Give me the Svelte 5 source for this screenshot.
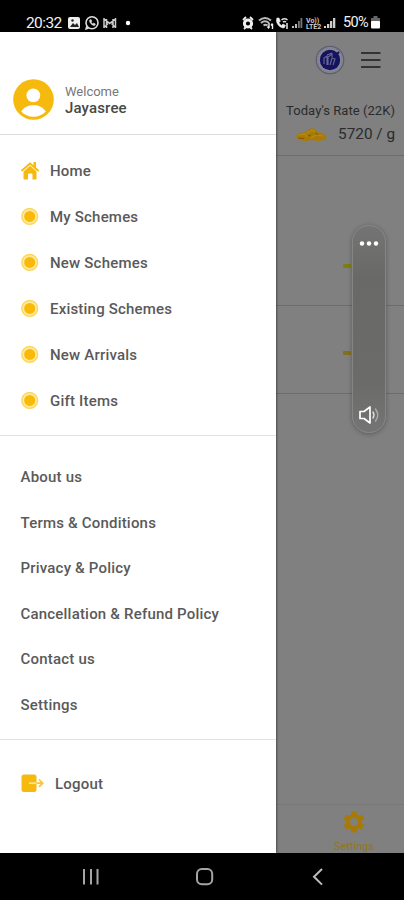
<script lang="ts">
  const schemes = ['My Schemes', 'New Schemes', 'Existing Schemes', 'New Arrivals', 'Gift Items'];
  const links = [
    'About us',
    'Terms & Conditions',
    'Privacy & Policy',
    'Cancellation & Refund Policy',
    'Contact us',
    'Settings'
  ];
</script>

<div class="phone">
  <div class="status">
    <span class="time">20:32</span>
    <svg class="status-left" width="66" height="16" viewBox="0 0 66 16">
      <rect x="0" y="2" width="12" height="12" rx="2" fill="#eee" />
      <path d="M2 12l3-4 2 2 2-2 2 4z" fill="#222" />
      <circle cx="4.5" cy="5.5" r="1.2" fill="#222" />
      <circle cx="24" cy="7.8" r="6" fill="none" stroke="#ddd" stroke-width="1.6" />
      <path d="M17 15l1.200-4.400 2.800 3.200z" fill="#ddd" />
      <path d="M21.700 5c-.8 2.300 2.200 5.500 4.900 5.600l.8-1.600-1.700-.9-.9.8-1.700-1.700.7-1-.8-1.600z" fill="#ddd" stroke="#ddd" stroke-width=".6" />
      <path d="M36 3v10M47.500 3v10M36 3.500l5.700 5 5.800-5M36 12.500l4-4M47.500 12.500l-4-4M38.500 4v9M45 4v9" fill="none" stroke="#ccc" stroke-width="1.500" />
      <circle cx="60" cy="8" r="2.200" fill="#fff" />
    </svg>
    <svg class="status-right" width="98" height="16" viewBox="0 0 98 16">
      <circle cx="6" cy="8.500" r="3.600" fill="none" stroke="#eee" stroke-width="3" />
      <path d="M1 5l3-3M11 5L8 2M2 14l2-2M10 14l-2-2" stroke="#eee" stroke-width="1.800" fill="none" />
      <path d="M17 5.500q6-5 12 0M19 8q4-3.500 8 0M21.500 10.500q2-1.500 4 0" fill="none" stroke="#bbb" stroke-width="2" />
      <path d="M27 8v5M25.500 11.500L27 13.500M30.500 14V9M29 10.500L30.500 8.500" stroke="#eee" stroke-width="1.400" fill="none" />
      <path d="M35 3c-2 4 2 10 7 10l1.500-2.500-2.500-1.500-1.500 1.500c-1.200-.7-2-1.800-2.500-3l1.300-1.300L37 3z" fill="#eee" stroke="#eee" stroke-width=".6" />
      <path d="M39.500 5q3-2.500 6 0M41 7q1.500-1 3 0M45 8v6" fill="none" stroke="#ddd" stroke-width="1.600" />
      <path d="M50 13v-2h2v2zM53 13V9h2v4z" fill="#bbb" />
      <path d="M56 13V6h1.800v7zM58.500 13V3h1.800v10z" fill="#777" />
      <text x="64" y="7.500" class="volte">Vo))</text>
      <text x="64" y="14" class="volte">LTE2</text>
      <path d="M82 13v-2h2v2zM85 13V9h2.300v4zM88 13V6h2.300v7zM91 13V3h2.300v10z" fill="#ccc" />
    </svg>
    <span class="percent">50%</span>
    <svg class="battery" width="9" height="13" viewBox="0 0 9 13">
      <path d="M2.500 0h4v2H9v4H0V2h2.500z" fill="#666" />
      <rect y="5" width="9" height="7.500" rx="1" fill="#fff" />
    </svg>
  </div>

  <div class="screen">
    <aside class="drawer">
      <div class="profile">
        <svg width="41" height="41" viewBox="0 0 41 41">
          <circle cx="20.500" cy="20.500" r="20.300" fill="#f6b90d" />
          <circle cx="20.300" cy="16.300" r="6.900" fill="#fff" />
          <path d="M8.200 32.500C11 28.200 15.500 26.300 20.500 26.300s9.500 1.900 12.300 6.200c-3 3.200-7.500 5.300-12.300 5.300s-9.300-2.100-12.300-5.300z" fill="#fff" />
        </svg>
        <div class="who">
          <span class="welcome">Welcome</span>
          <span class="name">Jayasree</span>
        </div>
      </div>

      <nav class="menu">
        <div class="item">
          <svg width="20" height="20" viewBox="0 0 20 20">
            <path d="M2 9.500l8-7 8 7" fill="none" stroke="#f6b90d" stroke-width="1.800" stroke-linecap="round" />
            <path d="M13.500 1H16v6l-2.500-2z" fill="#f6b90d" />
            <path d="M3.500 10.500L10 4.800l6.500 5.700v7q0 1-1 1h-3v-5q0-1-1-1h-2.500q-1 0-1 1v5h-3.500q-1 0-1-1z" fill="#f6b90d" />
          </svg>
          <span>Home</span>
        </div>
        {#each schemes as label}
          <div class="item">
            <svg width="20" height="20" viewBox="0 0 20 20">
              <circle cx="9.700" cy="9.400" r="7.900" fill="#fdea9c" stroke="#fad65c" stroke-width="1.300" />
              <circle cx="9.700" cy="9.400" r="5.500" fill="#f8b90a" />
            </svg>
            <span>{label}</span>
          </div>
        {/each}
      </nav>

      <nav class="links">
        {#each links as label}
          <div class="link">{label}</div>
        {/each}
      </nav>

      <div class="logout">
        <svg width="24" height="20" viewBox="0 0 24 20">
          <rect x="1.500" y=".5" width="15" height="17.500" rx="2.500" fill="#f6b90d" />
          <path d="M9 9.200h7.500" stroke="#fbe39a" stroke-width="1.800" />
          <path d="M16.500 9.200H22M19 5.500l3.700 3.700-3.700 3.700" fill="none" stroke="#f7c53a" stroke-width="1.700" />
        </svg>
        <span>Logout</span>
      </div>
    </aside>

    <main class="page">
      <header class="top">
        <div class="brand">
          <svg width="30" height="30" viewBox="0 0 30 30">
            <circle cx="15" cy="15" r="13.700" fill="#8a8a96" stroke="#5f5f74" stroke-width="1.300" />
            <circle cx="15" cy="15" r="12" fill="none" stroke="#77778a" stroke-width="1" stroke-dasharray="1.500 1" />
            <circle cx="15" cy="15" r="10.200" fill="#15135f" />
            <path d="M9 19v-6l3-2v9M13 20v-8l4-3v3M15 20l2-7 3 1-2 6M12 10l5-2" fill="none" stroke="#6a6890" stroke-width="1.100" />
            <path d="M20 11l4-4" stroke="#15135f" stroke-width="2" />
          </svg>
          <svg width="20" height="18" viewBox="0 0 20 18">
            <path d="M0 2h19.500M0 9h19.500M0 16h19.500" stroke="#333" stroke-width="2" />
          </svg>
        </div>
        <div class="rate-title">Today's Rate (22K)</div>
        <div class="rate">
          <svg width="31" height="13" viewBox="0 0 31 13">
            <path d="M0 8l3-3 7-1 3-3 5-1 3 4 6 1 4 4-2 3-8 1-5-1-6 1-8-1z" fill="#a97a08" />
            <path d="M3 7l6-1 2 3M11 5l6-3 2 3M15 10l5-3 7 1" fill="none" stroke="#b98d12" stroke-width="1.200" />
            <path d="M2 10l6 .5M12 8l3-1M19 5l3 2" stroke="#80590a" stroke-width="1" />
          </svg>
          <span>5720 / g</span>
        </div>
      </header>
      <section class="row tall"><i class="dash green"></i></section>
      <section class="row"><i class="dash"></i></section>
      <footer class="tab">
        <svg width="26" height="26" viewBox="0 0 24 24">
          <path fill="#a67a05" d="M19.140 12.940c.04-.3.06-.61.06-.94s-.02-.64-.07-.94l2.030-1.580a.49.49 0 0 0 .12-.61l-1.920-3.320a.49.49 0 0 0-.59-.22l-2.390.96c-.5-.38-1.030-.7-1.620-.94l-.36-2.540a.48.48 0 0 0-.48-.41h-3.840c-.24 0-.43.17-.47.41l-.36 2.540c-.59.24-1.130.57-1.620.94l-2.390-.96a.48.48 0 0 0-.59.22L2.740 8.870c-.12.21-.08.47.12.61l2.030 1.580c-.05.3-.09.63-.09.94s.02.64.07.94l-2.030 1.580a.49.49 0 0 0-.12.61l1.920 3.320c.12.22.37.29.59.22l2.390-.96c.5.38 1.030.7 1.620.94l.36 2.540c.05.24.24.41.48.41h3.840c.24 0 .44-.17.47-.41l.36-2.540c.59-.24 1.130-.56 1.620-.94l2.390.96c.22.08.47 0 .59-.22l1.920-3.320a.48.48 0 0 0-.12-.61zM12 15.600A3.600 3.600 0 1 1 12 8.400a3.600 3.600 0 0 1 0 7.200z" />
        </svg>
        <span>Settings</span>
      </footer>
    </main>

    <div class="volume">
      <svg width="20" height="5" viewBox="0 0 20 5" fill="#fff">
        <circle cx="3" cy="2.500" r="2.200" />
        <circle cx="10" cy="2.500" r="2.200" />
        <circle cx="17" cy="2.500" r="2.200" />
      </svg>
      <svg width="22" height="20" viewBox="0 0 22 20" fill="none" stroke-linejoin="round" stroke-linecap="round">
        <path d="M2 6.500h4l6-4.500v16l-6-4.500H2z" stroke="#fff" stroke-width="1.700" />
        <path d="M15 7q2 3 0 6" stroke="#ddd" stroke-width="1.400" />
        <path d="M17.500 4q4.500 6 0 12" stroke="#aaa" stroke-width="1.400" />
      </svg>
    </div>
  </div>

  <div class="navbar">
    <svg width="18" height="18" viewBox="0 0 18 18">
      <path d="M2 1v15.500M9 1v15.500M15.500 1v15.500" stroke="#a5a5a5" stroke-width="2" />
    </svg>
    <svg width="18" height="18" viewBox="0 0 18 18">
      <rect x="1" y="1" width="15.200" height="15.200" rx="4.800" fill="none" stroke="#a5a5a5" stroke-width="2" />
    </svg>
    <svg width="18" height="18" viewBox="0 0 18 18">
      <path d="M13 1L5 8.800l8 7.800" fill="none" stroke="#bdbdbd" stroke-width="2" />
    </svg>
  </div>
</div>

<style>
  :global(body) {
    margin: 0;
    background: #000;
  }

  svg {
    display: block;
    flex: none;
  }

  .phone {
    width: 404px;
    height: 900px;
    display: flex;
    flex-direction: column;
    overflow: hidden;
    background: #000;
    font-family: Roboto, 'Liberation Sans', sans-serif;
    color: #5a5a5a;
  }

  .status {
    box-sizing: border-box;
    height: 32px;
    padding: 13px 24px 0 26px;
    display: flex;
    align-items: center;
    color: #f2f2f2;
    font-size: 15.5px;
  }

  .time {
    width: 42px;
    letter-spacing: -0.6px;
  }

  .status-right {
    margin-left: auto;
  }

  .volte {
    font-size: 7px;
    font-weight: 700;
    fill: #ccc;
  }

  .percent {
    width: 27px;
    margin-left: 3px;
    font-size: 14.5px;
    letter-spacing: -0.6px;
  }

  .battery {
    margin-left: 1px;
  }

  .screen {
    position: relative;
    height: 821px;
    display: flex;
    background: #808080;
  }

  .drawer {
    width: 276px;
    background: #fff;
    box-shadow: 1px 0 2px rgba(0, 0, 0, 0.4);
    z-index: 1;
  }

  .profile {
    box-sizing: border-box;
    height: 103px;
    padding: 47px 0 0 13px;
    display: flex;
    gap: 11px;
    border-bottom: 1px solid #dedede;
  }

  .who {
    display: flex;
    flex-direction: column;
    padding-top: 4px;
  }

  .welcome {
    font-size: 13px;
    line-height: 17px;
    color: #777;
  }

  .name {
    font-size: 15px;
    font-weight: 500;
    line-height: 16px;
    letter-spacing: 0.15px;
    color: #484848;
  }

  .menu {
    padding: 13px 0 11px 20px;
    border-bottom: 1px solid #e2e2e2;
  }

  .item {
    height: 46px;
    display: flex;
    align-items: center;
    gap: 10px;
  }

  .item,
  .link,
  .logout {
    font-size: 15px;
    font-weight: 500;
    letter-spacing: 0.2px;
  }

  .links {
    padding: 19px 0 10px 20.5px;
    border-bottom: 1px solid #e2e2e2;
  }

  .link {
    height: 45.6px;
    line-height: 45.6px;
  }

  .logout {
    height: 88px;
    padding-left: 20px;
    display: flex;
    align-items: center;
    gap: 11px;
  }

  .page {
    flex: 1;
    display: flex;
    flex-direction: column;
    color: #2b2b2b;
  }

  .top {
    box-sizing: border-box;
    height: 124px;
    padding: 13px 9px 0 0;
    border-bottom: 1px solid #6c6c6c;
  }

  .brand {
    display: flex;
    align-items: center;
    justify-content: flex-end;
    gap: 16px;
    padding-right: 14px;
  }

  .rate-title {
    margin-top: 27px;
    font-size: 13px;
    line-height: 18px;
    letter-spacing: 0.05px;
    text-align: right;
    white-space: nowrap;
  }

  .rate {
    display: flex;
    align-items: center;
    justify-content: flex-end;
    gap: 11px;
    margin-top: 3px;
    font-size: 15.3px;
    line-height: 22px;
  }

  .row {
    box-sizing: border-box;
    height: 88px;
    padding: 0 53px 0 0;
    display: flex;
    align-items: center;
    justify-content: flex-end;
    border-bottom: 1px solid #6c6c6c;
  }

  .row.tall {
    height: 150px;
    padding-top: 70px;
  }

  .dash {
    width: 8px;
    height: 4px;
    margin-top: 7px;
    border-radius: 1px;
    background: #84701c;
  }

  .dash.green {
    margin-top: 0;
    background: #7d7f12;
  }

  .tab {
    height: 49px;
    margin-top: auto;
    padding: 4px 0 0 28px;
    box-sizing: border-box;
    width: 128px;
    display: flex;
    flex-direction: column;
    align-items: center;
    border-top: 1px solid #787878;
    color: #94741c;
    font-size: 10.5px;
    line-height: 13px;
    letter-spacing: 0.2px;
  }

  .tab span {
    margin-top: 5px;
  }

  /* system volume slider floating over the page */
  .volume {
    position: absolute;
    z-index: 2;
    top: 193px;
    left: 352px;
    box-sizing: border-box;
    width: 34px;
    height: 208px;
    padding: 15px 0 7px;
    display: flex;
    flex-direction: column;
    align-items: center;
    justify-content: space-between;
    border: 1px solid #858585;
    border-radius: 17px;
    background: linear-gradient(#747474, #696967 25%, #6b6b69 75%, #747474);
    box-shadow: 0 1px 5px rgba(0, 0, 0, 0.3);
  }

  .navbar {
    height: 47px;
    display: flex;
    align-items: center;
    justify-content: space-between;
    padding: 0 77px 0 82px;
  }
</style>
